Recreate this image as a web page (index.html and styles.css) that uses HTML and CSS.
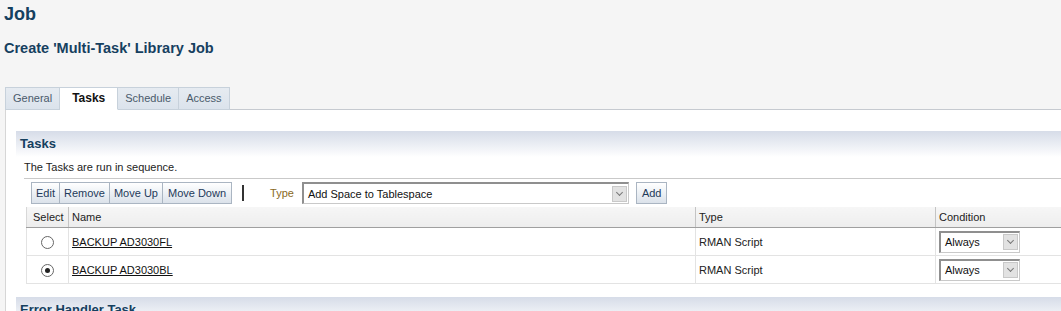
FILE: index.html
```html
<!DOCTYPE html>
<html>
<head>
    <title>Job</title>
    <meta charset="utf-8" />
    <link rel="stylesheet" href="styles.css">
</head>
<body>

    <div id="page">

        <h1 class="page_title">Job</h1>
        <h2 class="sub_title">Create 'Multi-Task' Library Job</h2>

        <div class="tabs">
            <div class="tab">General</div>
            <div class="tab tab_on">Tasks</div>
            <div class="tab">Schedule</div>
            <div class="tab">Access</div>
        </div>

        <div class="tab_panel">

            <div class="section_head">Tasks</div>

            <div class="section_body">
                <p class="hint">The Tasks are run in sequence.</p>

                <div class="toolbar">
                    <div class="btn_group">
                        <span class="btn">Edit</span>
                        <span class="btn">Remove</span>
                        <span class="btn">Move Up</span>
                        <span class="btn">Move Down</span>
                    </div>
                    <span class="tb_sep"></span>
                    <span class="type_label">Type</span>
                    <div class="fake_select type_select">
                        <span class="fs_text">Add Space to Tablespace</span>
                        <span class="fs_arrow"></span>
                    </div>
                    <span class="btn btn_single">Add</span>
                </div>

                <table class="grid">
                    <tr>
                        <th class="col_select">Select</th>
                        <th class="col_name">Name</th>
                        <th class="col_type">Type</th>
                        <th class="col_cond">Condition</th>
                    </tr>
                    <tr>
                        <td class="col_select"><span class="radio"></span></td>
                        <td><a href="#">BACKUP AD3030FL</a></td>
                        <td>RMAN Script</td>
                        <td>
                            <div class="fake_select cond_select">
                                <span class="fs_text">Always</span>
                                <span class="fs_arrow"></span>
                            </div>
                        </td>
                    </tr>
                    <tr>
                        <td class="col_select"><span class="radio radio_on"></span></td>
                        <td><a href="#">BACKUP AD3030BL</a></td>
                        <td>RMAN Script</td>
                        <td>
                            <div class="fake_select cond_select">
                                <span class="fs_text">Always</span>
                                <span class="fs_arrow"></span>
                            </div>
                        </td>
                    </tr>
                </table>
            </div>

            <div class="section_head">Error Handler Task</div>

        </div>

    </div>

</body>
</html>
```

FILE: styles.css
```css
body {
    margin: 0;
    background: #f5f5f5;
    font-family: "Liberation Sans", Arial, sans-serif;
    font-size: 11px;
    color: #222;
    overflow: hidden;
}

#page {
    width: 1061px;
    height: 311px;
    overflow: hidden;
}

.page_title {
    margin: 0;
    padding: 3px 0 0 4px;
    font-size: 18px;
    line-height: 22px;
    color: #15405f;
}

.sub_title {
    margin: 0;
    padding: 14px 0 0 4px;
    font-size: 14.5px;
    line-height: 18px;
    color: #15405f;
}

.tabs {
    display: flex;
    margin: 30px 0 -1px 5px;
    position: relative;
}

.tab {
    height: 21px;
    line-height: 21px;
    padding: 0 7px;
    color: #4a5a6b;
    background: linear-gradient(#e6ebf1, #dbe3ec);
    border: 1px solid #c7d1db;
    border-left: none;
}

.tab:first-child {
    border-left: 1px solid #c7d1db;
}

.tab_on {
    padding: 0 12px;
    background: #fff;
    border-bottom-color: #fff;
    font-weight: bold;
    font-size: 12px;
    color: #111;
}

.tab_panel {
    background: #fff;
    border-top: 1px solid #c6cad0;
    border-left: 1px solid #d6d6d6;
    margin-left: 5px;
    padding: 21px 0 0 10px;
    height: 300px;
}

.section_head {
    height: 26px;
    line-height: 26px;
    padding-left: 4px;
    background: linear-gradient(#d6dce8, #f2f4f8 70%, #fff);
    font-size: 13px;
    font-weight: bold;
    color: #15405f;
}

.section_body {
    padding: 0 0 13px 8px;
}

.hint {
    margin: 0;
    padding: 2px 0 2px 0;
    line-height: 17px;
    height: 17px;
    border-bottom: 1px solid #c9c9c9;
}

.toolbar {
    display: flex;
    align-items: center;
    height: 28px;
    padding-left: 7px;
}

.btn_group {
    display: flex;
}

.btn {
    display: inline-block;
    height: 20px;
    line-height: 20px;
    padding: 0 4px;
    color: #1e3a5a;
    background: linear-gradient(#ffffff, #e9eef3 60%, #dbe2ea);
    border: 1px solid #aab5c2;
    border-left: none;
}

.btn_group .btn:first-child {
    border-left: 1px solid #aab5c2;
}

.btn_group .btn:last-child {
    padding: 0 5px;
}

.btn_single {
    border-left: 1px solid #aab5c2;
    margin-left: 7px;
    padding: 0 5px;
}

.tb_sep {
    width: 2px;
    height: 16px;
    background: #333;
    margin: 0 26px 0 10px;
}

.type_label {
    color: #8a6a1e;
    margin-right: 8px;
}

.fake_select {
    display: flex;
    align-items: center;
    height: 19px;
    background: #fff;
    border: 1px solid #c9c9c9;
    border-top: 2px solid #8f8f8f;
    border-left: 2px solid #8f8f8f;
}

.type_select {
    width: 324px;
}

.fs_text {
    flex: 1;
    padding-left: 4px;
    color: #111;
}

.fs_arrow {
    width: 15px;
    height: 16px;
    margin-right: 1px;
    background: #e2e2e2;
    border: 1px solid #c8c8c8;
    box-sizing: border-box;
    position: relative;
}

.fs_arrow::after {
    content: "";
    position: absolute;
    left: 4px;
    top: 3px;
    width: 4px;
    height: 4px;
    border-right: 1px solid #777;
    border-bottom: 1px solid #777;
    transform: rotate(45deg);
}

.grid {
    border-collapse: collapse;
    margin-left: 2px;
    width: 1036px;
}

.grid th {
    height: 20px;
    text-align: left;
    font-weight: normal;
    color: #222;
    padding: 0 3px;
    background: linear-gradient(#f6f6f6, #ededed);
    border-left: 1px solid #c4c4c4;
    border-bottom: 1px solid #9f9f9f;
}

.grid td {
    height: 27px;
    padding: 0 3px;
    border-left: 1px solid #e3e3e3;
    border-bottom: 1px solid #e3e3e3;
    border-right: 1px solid #e3e3e3;
}

.grid th.col_select {
    width: 32px;
    padding-left: 6px;
    border-left: 1px solid #d8d8d8;
}

.grid th.col_name {
    width: 620px;
}

.grid th.col_type {
    width: 233px;
}

.grid td.col_select {
    text-align: center;
    padding: 0;
}

.grid a {
    color: #111;
}

.radio {
    display: inline-block;
    width: 11px;
    height: 11px;
    border-radius: 50%;
    border: 1px solid #666;
    background: #fff;
    vertical-align: middle;
    position: relative;
    top: 1px;
}

.radio_on::after {
    content: "";
    position: absolute;
    left: 3px;
    top: 3px;
    width: 5px;
    height: 5px;
    border-radius: 50%;
    background: #222;
}

.cond_select {
    width: 78px;
}
```
